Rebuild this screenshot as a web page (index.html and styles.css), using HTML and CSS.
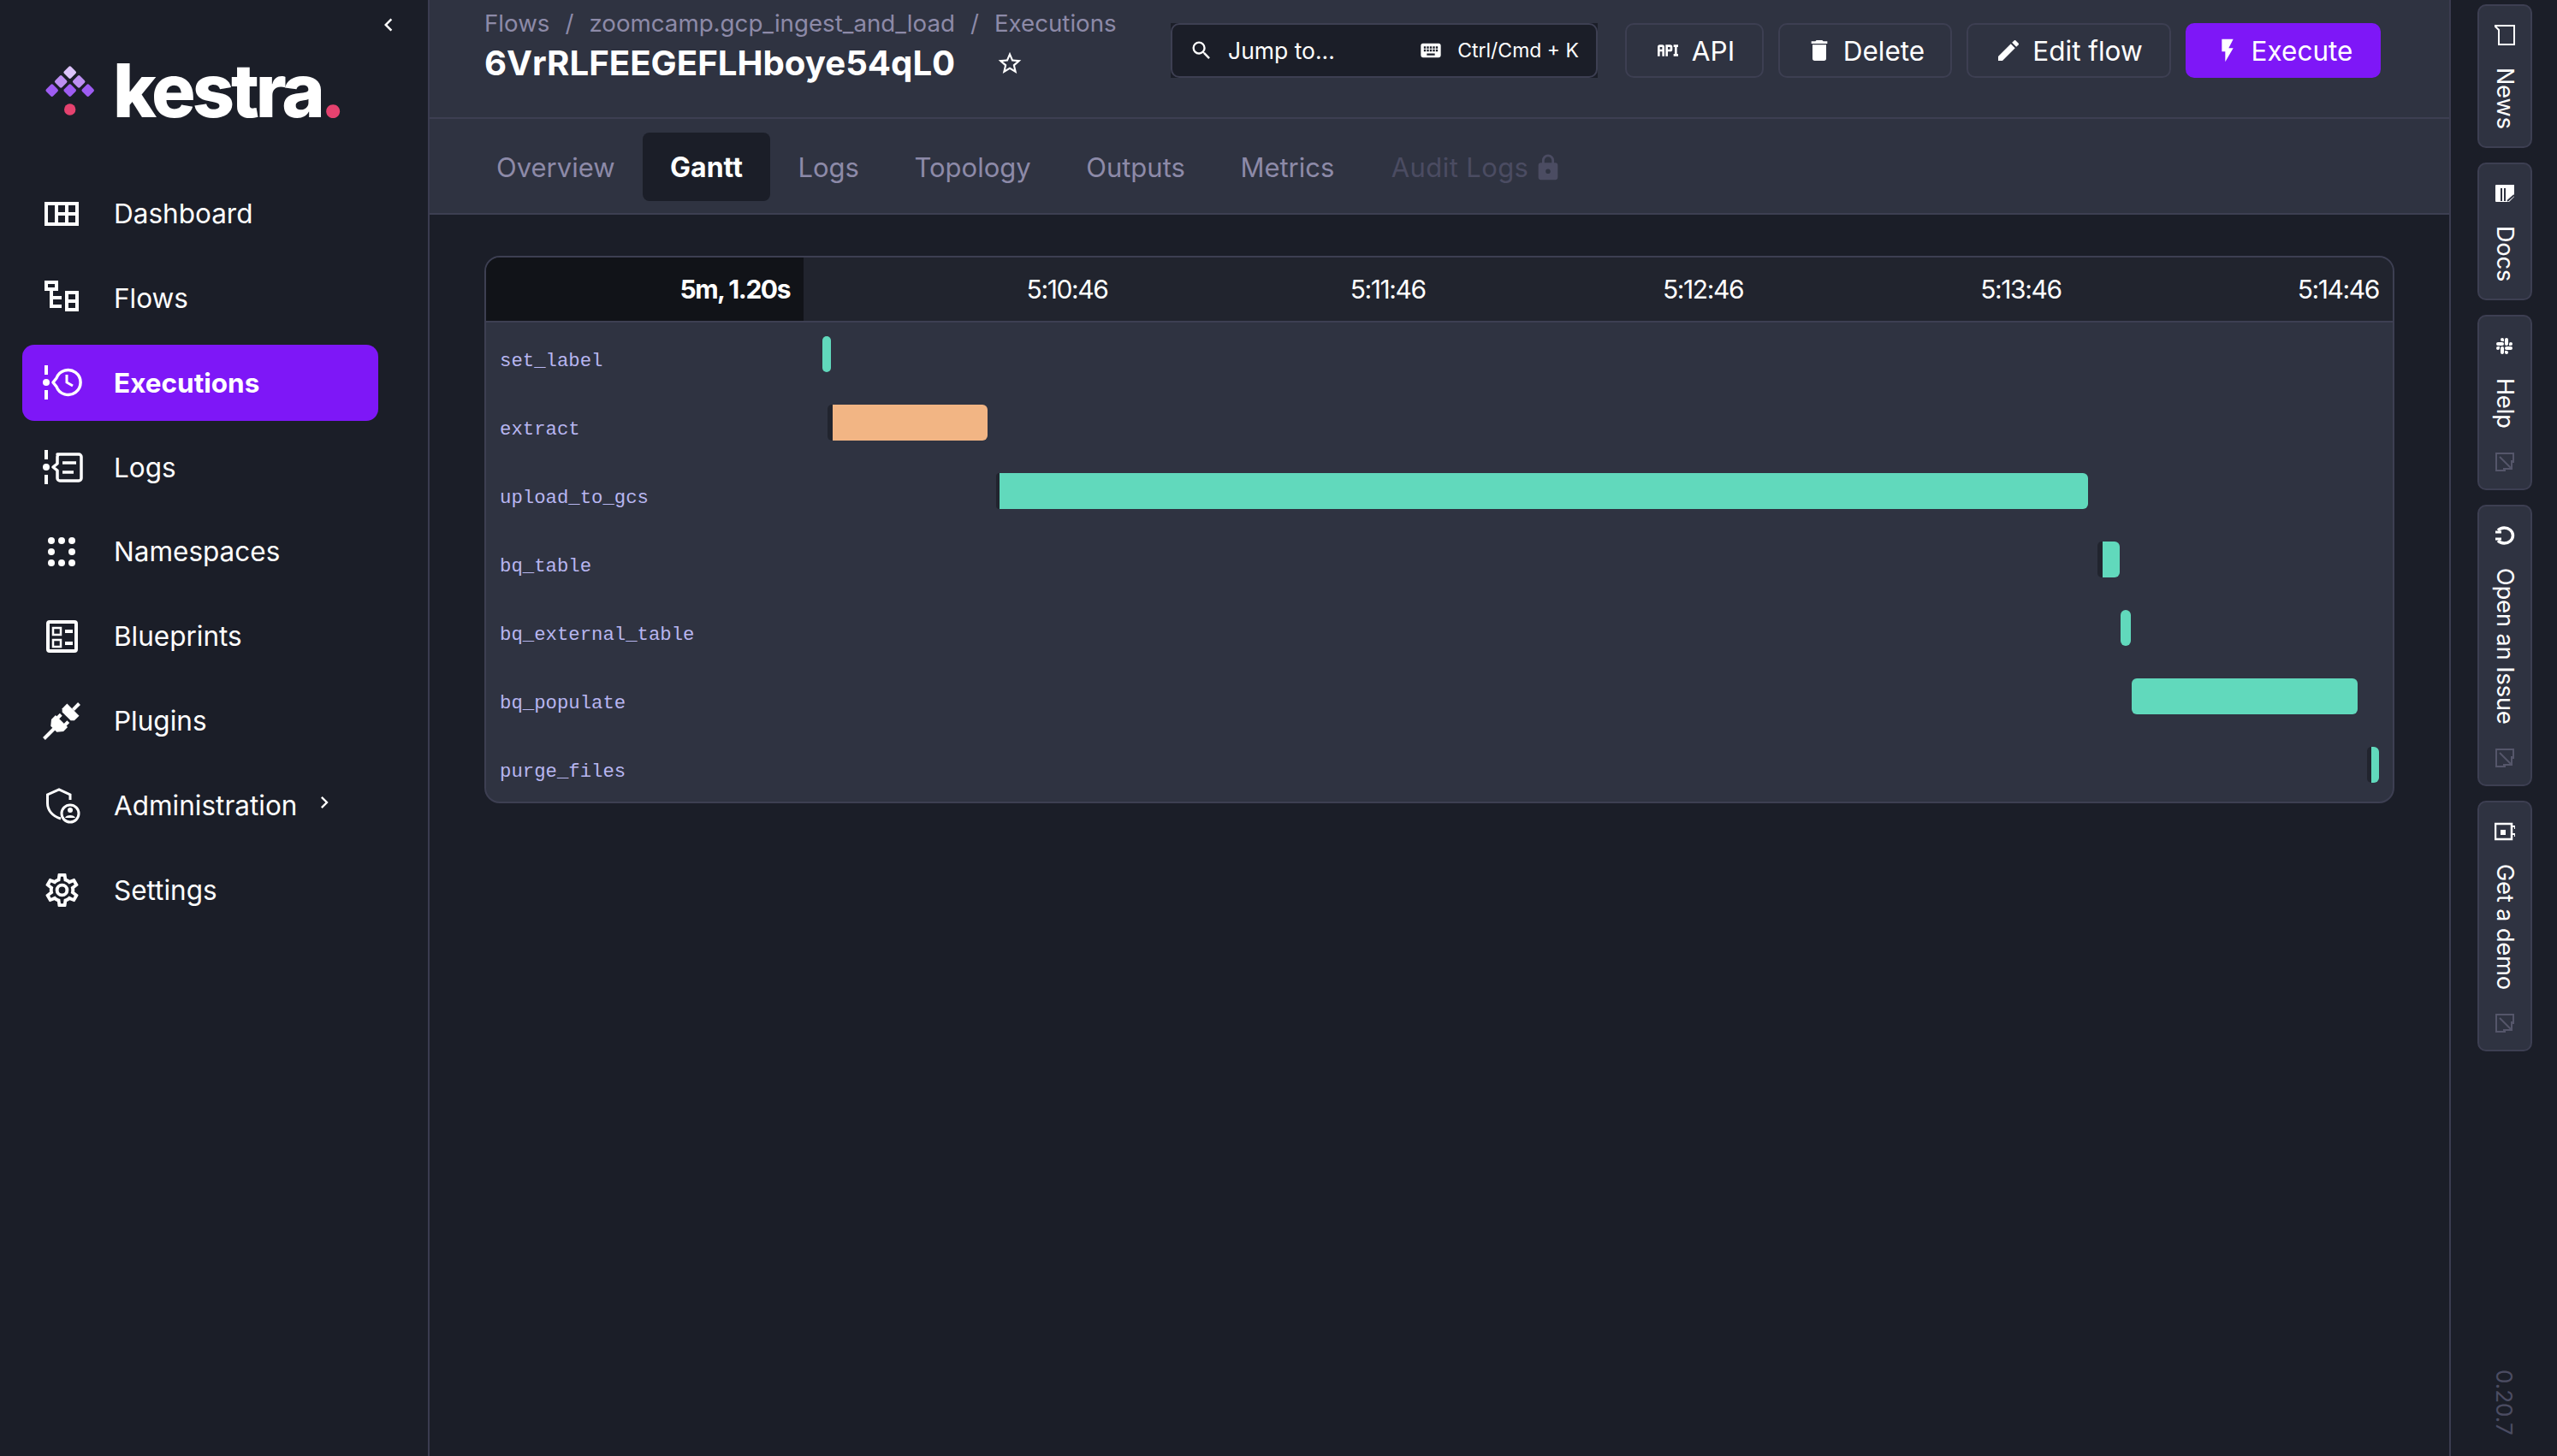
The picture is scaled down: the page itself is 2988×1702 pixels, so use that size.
FILE: index.html
```html
<!DOCTYPE html>
<html lang="en">
<head>
<meta charset="utf-8">
<title>Kestra</title>
<link rel="stylesheet" href="styles.css">
</head>
<body>
<div class="app">
  <aside class="sidebar">
    <div class="collapse-row"><svg class="collapse-icon" viewBox="0 0 24 24"><path d="M15.41,16.58L10.83,12L15.41,7.41L14,6L8,12L14,18L15.41,16.58Z"/></svg></div>
    <div class="logo">
      <svg class="logo-mark" viewBox="0 0 60 58">
        <rect x="24" y="1.900" width="11.400" height="11.400" rx="2" transform="rotate(45 29.700 7.600)" fill="#dcc3fb"/>
        <rect x="13.500" y="12.700" width="11.400" height="11.400" rx="2" transform="rotate(45 19.200 18.400)" fill="#bd8ff2"/>
        <rect x="34.500" y="12.700" width="11.400" height="11.400" rx="2" transform="rotate(45 40.200 18.400)" fill="#bd8ff2"/>
        <rect x="3" y="23" width="11.400" height="11.400" rx="2" transform="rotate(45 8.700 28.700)" fill="#9e5cf2"/>
        <rect x="24" y="23" width="11.400" height="11.400" rx="2" transform="rotate(45 29.700 28.700)" fill="#9e5cf2"/>
        <rect x="45" y="23" width="11.400" height="11.400" rx="2" transform="rotate(45 50.700 28.700)" fill="#9e5cf2"/>
        <circle cx="29.700" cy="51" r="6.700" fill="#e5426f"/>
      </svg>
      <span class="logo-text">kestra<span class="logo-dot">.</span></span>
    </div>
    <nav class="nav">
      <a class="nav-item">
        <svg class="nav-icon" viewBox="0 0 40 40" fill="none" stroke="#fff" stroke-width="4"><path d="M2 8H38V32H2ZM14 8V32M26 8V32M14 20H38"/></svg>
        <span>Dashboard</span>
      </a>
      <a class="nav-item">
        <svg class="nav-icon" viewBox="0 0 40 40" fill="none" stroke="#fff" stroke-width="4"><path d="M2 2H14V10H2ZM8 10V30H20M8 20H20M26 14H38V24H26ZM26 24H38V34H26Z"/></svg>
        <span>Flows</span>
      </a>
      <a class="nav-item active">
        <svg class="nav-icon wide" viewBox="0 0 46 40" fill="none" stroke="#fff" stroke-width="3.500"><path d="M4 0V11M4 29V40" stroke-width="4"/><circle cx="4" cy="20" r="4" fill="#fff" stroke="none"/><path d="M12 20 L16 15 A14.500 14.500 0 1 1 16 25Z" stroke-linejoin="round"/><path d="M28 11V20L35 24" stroke-width="3"/></svg>
        <span>Executions</span>
      </a>
      <a class="nav-item">
        <svg class="nav-icon wide" viewBox="0 0 46 40" fill="none" stroke="#fff" stroke-width="3.500"><path d="M4 0V11M4 29V40" stroke-width="4"/><circle cx="4" cy="20" r="4" fill="#fff" stroke="none"/><path d="M17 5H42A3 3 0 0 1 45 8V33A3 3 0 0 1 42 36H20A3 3 0 0 1 17 33V24L12 20L17 16V8A3 3 0 0 1 20 5Z" stroke-linejoin="round"/><path d="M23 15H39M23 26H36"/></svg>
        <span>Logs</span>
      </a>
      <a class="nav-item">
        <svg class="nav-icon" viewBox="0 0 40 40" fill="#fff"><circle cx="8" cy="7" r="4"/><circle cx="20" cy="7" r="4"/><circle cx="32" cy="7" r="4"/><circle cx="8" cy="20" r="4"/><circle cx="32" cy="20" r="4"/><circle cx="8" cy="33" r="4"/><circle cx="20" cy="33" r="4"/><circle cx="32" cy="33" r="4"/></svg>
        <span>Namespaces</span>
      </a>
      <a class="nav-item">
        <svg class="nav-icon" viewBox="0 0 40 40" fill="none" stroke="#fff"><rect x="4" y="3" width="33" height="34" rx="2" stroke-width="4"/><path d="M10 10H19V18H10ZM10 24H19V32H10Z" stroke-width="2.500"/><path d="M24 14H33M24 28H33" stroke-width="4"/></svg>
        <span>Blueprints</span>
      </a>
      <a class="nav-item">
        <svg class="nav-icon" viewBox="0 0 40 40" fill="#fff"><g transform="rotate(45 20 20)"><rect x="18" y="-9" width="4" height="10"/><path d="M10 1H30V9L27 12H13L10 9Z"/><rect x="12" y="15" width="4" height="6"/><rect x="24" y="15" width="4" height="6"/><path d="M10 20H30V27L25 33H15L10 27Z"/><rect x="18" y="32" width="4" height="17"/></g></svg>
        <span>Plugins</span>
      </a>
      <a class="nav-item">
        <svg class="nav-icon" viewBox="0 0 40 40" fill="none" stroke="#fff" stroke-width="3"><path d="M19 36C9 33 3.500 26 3.500 18V8L17 2L30 8V14"/><circle cx="30" cy="30" r="10"/><circle cx="30" cy="26" r="3" fill="#fff" stroke="none"/><path d="M24 35C25 31 35 31 36 35Z" fill="#fff" stroke="none"/></svg>
        <span>Administration</span>
        <svg class="nav-chevron" viewBox="0 0 24 24"><path d="M8.59,16.58L13.17,12L8.59,7.41L10,6L16,12L10,18L8.59,16.58Z"/></svg>
      </a>
      <a class="nav-item">
        <svg class="nav-icon gear" viewBox="0 0 24 24" fill="#fff"><path d="M12,8A4,4 0 0,1 16,12A4,4 0 0,1 12,16A4,4 0 0,1 8,12A4,4 0 0,1 12,8M12,10A2,2 0 0,0 10,12A2,2 0 0,0 12,14A2,2 0 0,0 14,12A2,2 0 0,0 12,10M10,22C9.75,22 9.54,21.82 9.5,21.58L9.13,18.93C8.5,18.68 7.96,18.34 7.44,17.94L4.95,18.95C4.73,19.03 4.46,18.95 4.34,18.73L2.34,15.27C2.21,15.05 2.27,14.78 2.46,14.63L4.57,12.97L4.5,12L4.57,11L2.46,9.37C2.27,9.22 2.21,8.95 2.34,8.73L4.34,5.27C4.46,5.05 4.73,4.96 4.95,5.05L7.44,6.05C7.96,5.66 8.5,5.32 9.13,5.07L9.5,2.42C9.54,2.18 9.75,2 10,2H14C14.25,2 14.46,2.18 14.5,2.42L14.87,5.07C15.5,5.32 16.04,5.66 16.56,6.05L19.05,5.05C19.27,4.96 19.54,5.05 19.66,5.27L21.66,8.73C21.79,8.95 21.73,9.22 21.54,9.37L19.43,11L19.5,12L19.43,13L21.54,14.63C21.73,14.78 21.79,15.05 21.66,15.27L19.66,18.73C19.54,18.95 19.27,19.04 19.05,18.95L16.56,17.95C16.04,18.34 15.5,18.68 14.87,18.93L14.5,21.58C14.46,21.82 14.25,22 14,22H10M11.25,4L10.88,6.61C9.68,6.86 8.62,7.5 7.85,8.39L5.44,7.35L4.69,8.65L6.8,10.2C6.4,11.37 6.4,12.64 6.8,13.8L4.68,15.36L5.43,16.66L7.86,15.62C8.63,16.5 9.68,17.14 10.87,17.38L11.24,20H12.76L13.13,17.39C14.32,17.14 15.37,16.5 16.14,15.62L18.57,16.66L19.32,15.36L17.2,13.81C17.6,12.64 17.6,11.37 17.2,10.2L19.31,8.65L18.56,7.35L16.15,8.39C15.38,7.5 14.32,6.86 13.12,6.62L12.75,4H11.25Z"/></svg>
        <span>Settings</span>
      </a>
    </nav>
  </aside>

  <main class="main">
    <header class="topbar">
      <div class="title-block">
        <div class="crumbs"><span>Flows</span><span>/</span><span>zoomcamp.gcp_ingest_and_load</span><span>/</span><span>Executions</span></div>
        <div class="title-row">
          <h1 class="title">6VrRLFEEGEFLHboye54qL0</h1>
          <svg class="star" viewBox="0 0 24 24"><path d="M12,15.39L8.24,17.66L9.23,13.38L5.91,10.5L10.29,10.13L12,6.09L13.71,10.13L18.09,10.5L14.77,13.38L15.76,17.66M22,9.24L14.81,8.63L12,2L9.19,8.63L2,9.24L7.45,13.97L5.82,21L12,17.27L18.18,21L16.54,13.97L22,9.24Z"/></svg>
        </div>
      </div>
      <div class="actions">
        <div class="search">
          <div class="search-box">
            <svg class="search-icon" viewBox="0 0 24 24"><path d="M9.5,3A6.5,6.5 0 0,1 16,9.5C16,11.11 15.41,12.59 14.44,13.73L14.71,14H15.5L20.5,19L19,20.5L14,15.5V14.71L13.73,14.44C12.59,15.41 11.11,16 9.5,16A6.5,6.5 0 0,1 3,9.5A6.5,6.5 0 0,1 9.5,3M9.5,5C7,5 5,7 5,9.5C5,12 7,14 9.5,14C12,14 14,12 14,9.5C14,7 12,5 9.5,5Z"/></svg>
            <span class="search-label">Jump to...</span>
            <svg class="search-icon kbd" viewBox="0 0 24 24"><path d="M19,10H17V8H19M19,13H17V11H19M16,10H14V8H16M16,13H14V11H16M16,17H8V15H16M7,10H5V8H7M7,13H5V11H7M8,11H10V13H8M8,8H10V10H8M11,11H13V13H11M11,8H13V10H11M20,5H4C2.89,5 2,5.89 2,7V17A2,2 0 0,0 4,19H20A2,2 0 0,0 22,17V7C22,5.89 21.1,5 20,5Z"/></svg>
            <span class="search-hint">Ctrl/Cmd + K</span>
          </div>
        </div>
        <button class="btn btn-api"><svg class="btn-icon" viewBox="0 0 24 24"><path d="M7 7H5A2 2 0 0 0 3 9V17H5V13H7V17H9V9A2 2 0 0 0 7 7M7 11H5V9H7M14 7H10V17H12V13H14A2 2 0 0 0 16 11V9A2 2 0 0 0 14 7M14 11H12V9H14M20 9V15H21V17H17V15H18V9H17V7H21V9Z"/></svg>API</button>
        <button class="btn btn-delete"><svg class="btn-icon" viewBox="0 0 24 24"><path d="M19,4H15.5L14.5,3H9.5L8.5,4H5V6H19M6,19A2,2 0 0,0 8,21H16A2,2 0 0,0 18,19V7H6V19Z"/></svg>Delete</button>
        <button class="btn btn-edit"><svg class="btn-icon" viewBox="0 0 24 24"><path d="M20.71,7.04C21.1,6.65 21.1,6 20.71,5.63L18.37,3.29C18,2.9 17.35,2.9 16.96,3.29L15.12,5.12L18.87,8.87M3,17.25V21H6.75L17.81,9.93L14.06,6.18L3,17.25Z"/></svg>Edit flow</button>
        <button class="btn btn-primary"><svg class="btn-icon" viewBox="0 0 24 24"><path d="M7,2V13H10V22L17,10H13L17,2H7Z"/></svg>Execute</button>
      </div>
    </header>

    <div class="tabs">
      <a class="tab">Overview</a>
      <a class="tab active">Gantt</a>
      <a class="tab">Logs</a>
      <a class="tab">Topology</a>
      <a class="tab">Outputs</a>
      <a class="tab">Metrics</a>
      <a class="tab disabled">Audit Logs<svg class="lock" viewBox="0 0 24 24"><path d="M12,17A2,2 0 0,0 14,15C14,13.89 13.1,13 12,13A2,2 0 0,0 10,15A2,2 0 0,0 12,17M18,8A2,2 0 0,1 20,10V20A2,2 0 0,1 18,22H6A2,2 0 0,1 4,20V10C4,8.89 4.9,8 6,8H7V6A5,5 0 0,1 12,1A5,5 0 0,1 17,6V8H18M12,3A3,3 0 0,0 9,6V8H15V6A3,3 0 0,0 12,3Z"/></svg></a>
    </div>

    <section class="content">
      <div class="gantt">
        <div class="gantt-head">
          <div class="gantt-total">5m, 1.20s</div>
          <div class="gantt-ticks">
            <span class="tick">5:10:46</span>
            <span class="tick">5:11:46</span>
            <span class="tick">5:12:46</span>
            <span class="tick">5:13:46</span>
            <span class="tick">5:14:46</span>
          </div>
        </div>
        <div class="gantt-row"><span class="task">set_label</span><div class="track"><div class="bar ok" style="margin-left:23px;width:10px"></div></div></div>
        <div class="gantt-row"><span class="task">extract</span><div class="track"><div class="wait" style="margin-left:29px;width:6px"></div><div class="bar warn" style="width:181px"></div></div></div>
        <div class="gantt-row"><span class="task">upload_to_gcs</span><div class="track"><div class="wait" style="margin-left:226px;width:4px"></div><div class="bar ok" style="width:1272px"></div></div></div>
        <div class="gantt-row"><span class="task">bq_table</span><div class="track"><div class="wait" style="margin-left:1513px;width:6px"></div><div class="bar ok" style="width:20px"></div></div></div>
        <div class="gantt-row"><span class="task">bq_external_table</span><div class="track"><div class="bar ok" style="margin-left:1540px;width:12px"></div></div></div>
        <div class="gantt-row"><span class="task">bq_populate</span><div class="track"><div class="bar ok" style="margin-left:1553px;width:264px"></div></div></div>
        <div class="gantt-row"><span class="task">purge_files</span><div class="track"><div class="wait" style="margin-left:1828px;width:5px"></div><div class="bar ok" style="width:9px"></div></div></div>
      </div>
    </section>
  </main>

  <aside class="rail">
    <a class="rail-btn">
      <svg class="rail-icon" viewBox="0 0 24 24" fill="none" stroke="#fff" stroke-width="2"><path d="M0 1H23V23H5V6Z"/></svg>
      <span class="rail-text">News</span>
    </a>
    <a class="rail-btn">
      <svg class="rail-icon" viewBox="0 0 24 24"><path fill="#fff" d="M2 2H23V16L17 22H2A1 1 0 0 1 1 21V3A1 1 0 0 1 2 2Z"/><path d="M8 6V21M12 6V21M15 21L23 14" stroke="#2f3341" stroke-width="2" fill="none"/></svg>
      <span class="rail-text">Docs</span>
    </a>
    <a class="rail-btn">
      <svg class="rail-icon" viewBox="0 0 24 24" fill="#fff"><path d="M6,15A2,2 0 0,1 4,17A2,2 0 0,1 2,15A2,2 0 0,1 4,13H6V15M7,15A2,2 0 0,1 9,13A2,2 0 0,1 11,15V20A2,2 0 0,1 9,22A2,2 0 0,1 7,20V15M9,7A2,2 0 0,1 7,5A2,2 0 0,1 9,3A2,2 0 0,1 11,5V7H9M9,8A2,2 0 0,1 11,10A2,2 0 0,1 9,12H4A2,2 0 0,1 2,10A2,2 0 0,1 4,8H9M17,10A2,2 0 0,1 19,8A2,2 0 0,1 21,10A2,2 0 0,1 19,12H17V10M16,10A2,2 0 0,1 14,12A2,2 0 0,1 12,10V5A2,2 0 0,1 14,3A2,2 0 0,1 16,5V10M14,18A2,2 0 0,1 16,20A2,2 0 0,1 14,22A2,2 0 0,1 12,20V18H14M14,17A2,2 0 0,1 12,15A2,2 0 0,1 14,13H19A2,2 0 0,1 21,15A2,2 0 0,1 19,17H14Z"/></svg>
      <span class="rail-text">Help</span>
      <svg class="rail-ext" viewBox="0 0 22 22" fill="none" stroke="#55566a" stroke-width="2"><path d="M21 12V1H1V21H12M5 5L19 19M19 9V19H9"/></svg>
    </a>
    <a class="rail-btn">
      <svg class="rail-icon" viewBox="0 0 24 24" fill="none" stroke="#fff" stroke-width="3.500"><path d="M4 6A10 9 0 1 1 4 18"/><path d="M1 8H8M1 16H8" stroke-width="3"/></svg>
      <span class="rail-text">Open an Issue</span>
      <svg class="rail-ext" viewBox="0 0 22 22" fill="none" stroke="#55566a" stroke-width="2"><path d="M21 12V1H1V21H12M5 5L19 19M19 9V19H9"/></svg>
    </a>
    <a class="rail-btn">
      <svg class="rail-icon" viewBox="0 0 24 24" fill="none" stroke="#fff" stroke-width="2.500"><path d="M1 3H20V21H1Z"/><path d="M7 10H13V16H7Z" fill="#fff" stroke="none"/><path d="M21 6H24V9M21 15H24V18" stroke-width="2"/></svg>
      <span class="rail-text">Get a demo</span>
      <svg class="rail-ext" viewBox="0 0 22 22" fill="none" stroke="#55566a" stroke-width="2"><path d="M21 12V1H1V21H12M5 5L19 19M19 9V19H9"/></svg>
    </a>
    <span class="version">0.20.7</span>
  </aside>
</div>
</body>
</html>
```
FILE: styles.css
```css
* { box-sizing: border-box; }
html, body { margin: 0; padding: 0; height: 100%; }
body {
  background: #1b1e28;
  color: #fff;
  font-family: "Inter", "Open Sans", sans-serif;
  overflow: hidden;
}
.app { display: flex; width: 2988px; height: 1702px; }

/* sidebar */
.sidebar {
  width: 502px;
  flex: none;
  border-right: 2px solid #3b3c50;
  display: flex;
  flex-direction: column;
}
.collapse-row { display: flex; justify-content: flex-end; padding: 14px 31px 0 0; height: 74px; }
.collapse-icon { width: 30px; height: 30px; fill: #fff; }
.logo { display: flex; align-items: center; height: 64px; padding-left: 52px; gap: 20px; }
.logo-mark { width: 60px; height: 58px; flex: none; }
.logo-text {
  font-family: "Inter", sans-serif;
  font-weight: 800;
  font-size: 86px;
  line-height: 64px;
  letter-spacing: -4px;
  color: #fff;
}
.logo-dot { color: #e5426f; margin-left: -2px; }
.nav { display: flex; flex-direction: column; gap: 9.85px; margin: 67px 0 0 26px; width: 416px; }
.nav-item {
  display: flex;
  align-items: center;
  height: 89px;
  padding-left: 26px;
  font-size: 31.5px;
  color: #fff;
  border-radius: 14px;
}
.nav-item > span { margin-left: 41px; }
.nav-icon { width: 40px; height: 40px; flex: none; overflow: visible; }
.nav-icon.wide { width: 46px; margin: 0 -4px 0 -2px; }
.nav-icon.gear { width: 47px; height: 47px; margin: 0 -3.5px; }
.nav-item.active { background: #7e17f7; font-weight: 700; }
.nav-chevron { width: 28px; height: 28px; margin: -6px 0 0 18px; fill: #fff; }

/* main */
.main { flex: 1; min-width: 0; display: flex; flex-direction: column; }
.topbar {
  height: 139px;
  background: #2f3341;
  border-bottom: 2px solid #3d3f52;
  display: flex;
  justify-content: space-between;
  padding: 8px 80px 0 64px;
}
.crumbs { display: flex; gap: 18px; font-size: 27.7px; color: #8d8aa8; line-height: 38px; }
.title-row { display: flex; align-items: center; gap: 48px; margin-top: 3px; }
.title { margin: 0; font-size: 40.2px; font-weight: 700; line-height: 50px; }
.star { width: 32px; height: 32px; fill: #fff; margin-top: -1px; }
.actions { display: flex; gap: 17px; padding-top: 19px; height: 83px; }
.search {
  width: 499px;
  height: 64px;
  background: #1b1e28;
  margin-right: 15px;
}
.search-box {
  height: 64px;
  background: #1b1e28;
  border: 2px solid #3d3f52;
  border-radius: 10px;
  display: flex;
  align-items: center;
  padding: 0 20px;
  font-size: 26.5px;
}
.search-icon { width: 28px; height: 28px; fill: #fff; flex: none; }
.search-label { margin-left: 17px; }
.kbd { margin-left: auto; }
.search-hint { margin-left: 17px; font-size: 23px; }
.btn {
  height: 64px;
  display: flex;
  align-items: center;
  justify-content: center;
  gap: 12px;
  background: transparent;
  border: 2px solid #3d3f52;
  border-radius: 10px;
  color: #fff;
  font-family: inherit;
  font-size: 31.5px;
  padding: 0;
}
.btn-icon { width: 32px; height: 32px; fill: #fff; flex: none; }
.btn-api { width: 162px; }
.btn-delete { width: 203px; }
.btn-edit { width: 239px; }
.btn-primary { width: 228px; background: #7e17f7; border-color: #7e17f7; }

.tabs {
  height: 112px;
  background: #2f3341;
  border-bottom: 2px solid #3d3f52;
  display: flex;
  align-items: center;
  gap: 0.5px;
  padding: 1px 0 0 46px;
}
.tab {
  height: 80px;
  display: flex;
  align-items: center;
  padding: 2px 32px 0;
  font-size: 31px;
  color: #8d8aa8;
  border-radius: 8px;
}
.tab.active { background: #1b1e28; color: #fff; font-weight: 700; font-size: 32px; }
.tab.disabled { color: #4b4c62; margin-left: 2px; letter-spacing: 0.4px; }
.lock { width: 34px; height: 34px; fill: #4b4c62; margin-left: 6px; }

/* gantt */
.content { flex: 1; padding: 48px 64px 0 64px; }
.gantt {
  border: 2px solid #3d3f52;
  border-radius: 18px;
  background: #2f3341;
  overflow: hidden;
}
.gantt-head { display: flex; height: 76px; border-bottom: 2px solid #3d3f52; background: #21242e; }
.gantt-total {
  width: 371px;
  flex: none;
  background: #111318;
  display: flex;
  align-items: center;
  justify-content: flex-end;
  padding: 0 16px 1px 0;
  font-size: 30px;
  font-weight: 700;
  letter-spacing: -1.45px;
}
.gantt-ticks { flex: 1; display: grid; grid-template-columns: repeat(5, 1fr); }
.tick {
  display: flex;
  align-items: center;
  justify-content: flex-end;
  padding: 0 16px 1px 0;
  font-size: 30px;
  letter-spacing: -1.4px;
}
.gantt-row { display: flex; height: 80px; }
.task {
  width: 371px;
  flex: none;
  padding: 31px 0 0 16px;
  font-family: "Liberation Mono", monospace;
  font-size: 22.3px;
  line-height: 28px;
  color: #b8b6f0;
}
.track { flex: 1; display: flex; padding-top: 16px; margin-left: -1px; }
.bar, .wait { height: 42px; flex: none; }
.bar { border-radius: 0 6px 6px 0; }
.wait { background: #21242e; border-radius: 5px 0 0 5px; }
.ok { background: #61d9bc; }
.warn { background: #f2b584; }
.track > .bar:first-child { border-radius: 6px; }

/* right rail */
.rail {
  width: 126px;
  flex: none;
  border-left: 2px solid #3b3c50;
  display: flex;
  flex-direction: column;
  align-items: center;
  padding-top: 5px;
  gap: 17px;
}
.rail-btn {
  width: 64px;
  margin-left: 1px;
  background: #2f3341;
  border: 2px solid #3d3f52;
  border-radius: 10px;
  display: flex;
  flex-direction: column;
  align-items: center;
  padding: 22px 0 20px;
}
.rail-icon { width: 24px; height: 24px; flex: none; }
.rail-text {
  writing-mode: vertical-rl;
  font-size: 27px;
  line-height: 30px;
  margin-top: 26px;
}
.rail-ext { width: 22px; height: 22px; flex: none; margin-top: 28px; }
.version {
  margin-top: auto;
  margin-left: 1px;
  margin-bottom: 24px;
  writing-mode: vertical-rl;
  font-size: 26px;
  color: #4b4c62;
}
```
